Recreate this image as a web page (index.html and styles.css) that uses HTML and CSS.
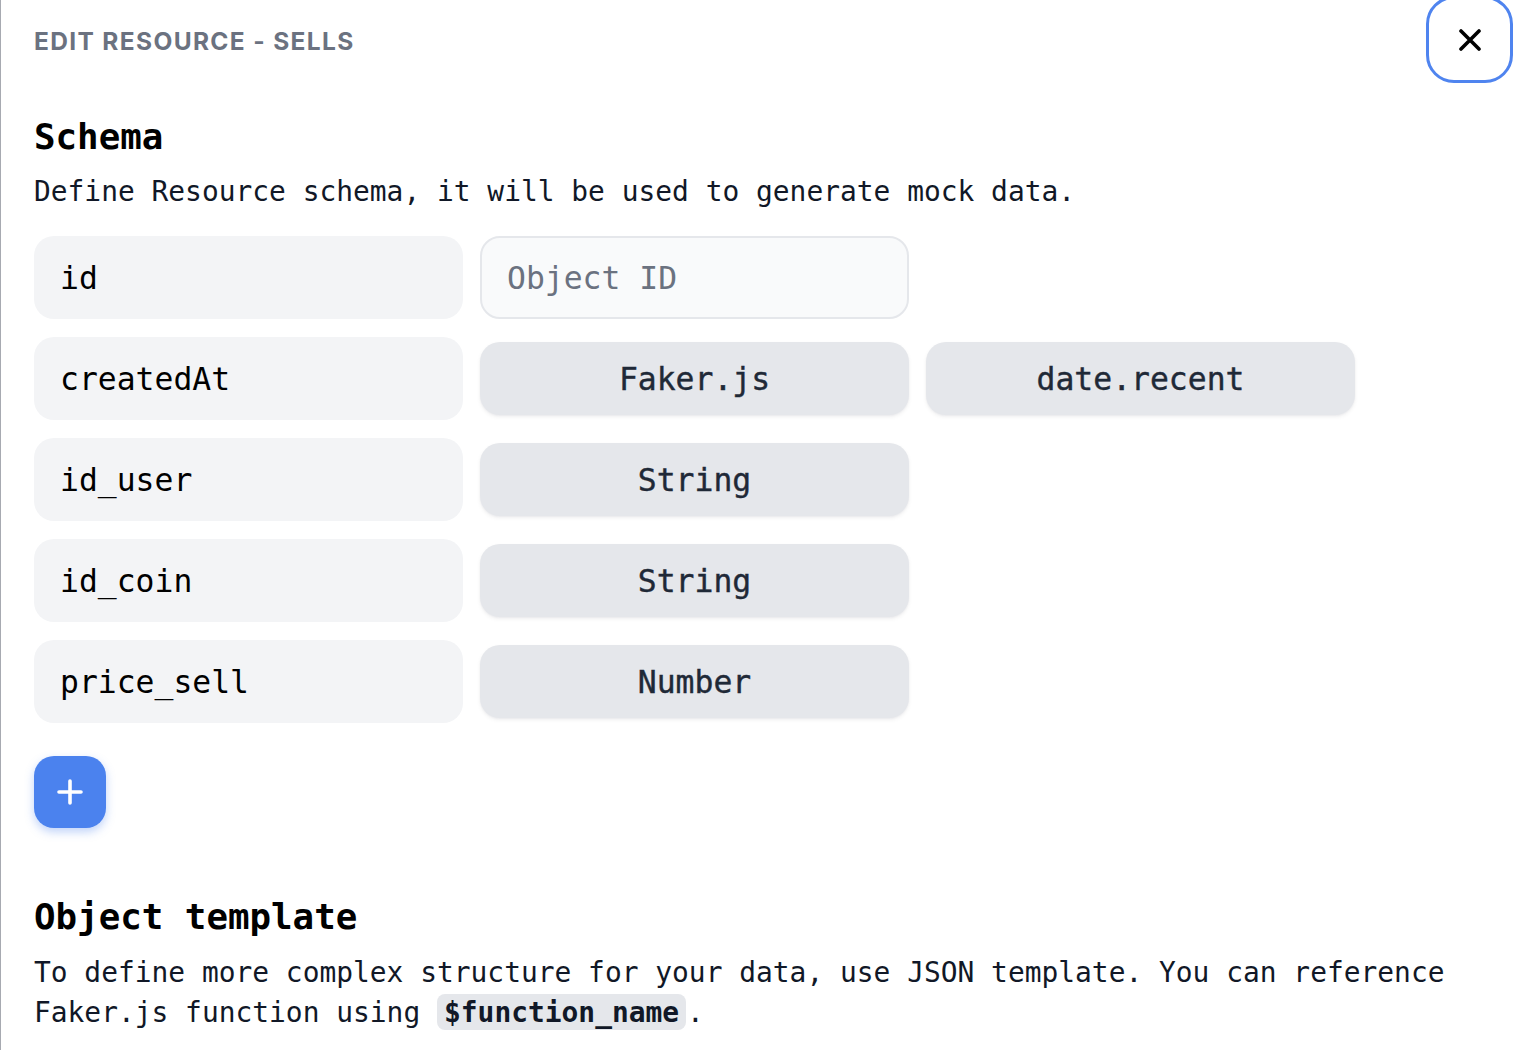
FILE: index.html
```html
<!DOCTYPE html>
<html lang="en">
<head>
<meta charset="utf-8">
<title>Edit Resource - sells</title>
<link rel="stylesheet" href="styles.css">
</head>
<body>
<div class="modal">
  <header class="modal-header">
    <h1 class="modal-title">EDIT RESOURCE - SELLS</h1>
    <button class="close-btn" aria-label="Close">
      <svg width="22" height="22" viewBox="0 0 22 22"><path d="M2 2 L20 20 M20 2 L2 20" fill="none" stroke="#000" stroke-width="3.6" stroke-linecap="round"/></svg>
    </button>
  </header>

  <section class="schema">
    <h2 class="section-title">Schema</h2>
    <p class="section-desc">Define Resource schema, it will be used to generate mock data.</p>

    <div class="fields">
      <div class="field-row">
        <div class="field-key">id</div>
        <input class="field-input" type="text" placeholder="Object ID">
      </div>
      <div class="field-row">
        <div class="field-key">createdAt</div>
        <button class="type-btn">Faker.js</button>
        <button class="type-btn">date.recent</button>
      </div>
      <div class="field-row">
        <div class="field-key">id_user</div>
        <button class="type-btn">String</button>
      </div>
      <div class="field-row">
        <div class="field-key">id_coin</div>
        <button class="type-btn">String</button>
      </div>
      <div class="field-row">
        <div class="field-key">price_sell</div>
        <button class="type-btn">Number</button>
      </div>
    </div>

    <button class="add-btn" aria-label="Add field">
      <svg width="26" height="26" viewBox="0 0 26 26"><path d="M13 2 V24 M2 13 H24" fill="none" stroke="#fff" stroke-width="3.6" stroke-linecap="round"/></svg>
    </button>
  </section>

  <section class="template">
    <h2 class="section-title">Object template</h2>
    <p class="section-desc template-desc"><span>To define more complex structure for your data, use JSON template. You can reference</span> <span>Faker.js function using</span> <code class="code-pill">$function_name</code><span>.</span></p>
  </section>
</div>
</body>
</html>
```

FILE: styles.css
```css
html, body {
  margin: 0;
  padding: 0;
  background: #ffffff;
}

body {
  font-family: "DejaVu Sans Mono", "Liberation Mono", monospace;
  color: #111827;
}

.modal {
  position: relative;
  min-height: 1050px;
  box-sizing: border-box;
  border-left: 1px solid #a7aab1;
  padding: 24px 34px 0 33px;
}

.modal-header {
  display: flex;
  align-items: center;
  height: 35px;
}

.modal-title {
  margin: 0;
  font-family: "Inter", "Liberation Sans", sans-serif;
  font-weight: 700;
  font-size: 24.5px;
  line-height: 35px;
  letter-spacing: 1.35px;
  color: #6b7280;
}

.close-btn {
  position: absolute;
  top: -4px;
  right: 5px;
  width: 87px;
  height: 87px;
  box-sizing: border-box;
  border: 3.5px solid #4f84ef;
  border-radius: 28px;
  background: #ffffff;
  display: flex;
  align-items: center;
  justify-content: center;
  padding: 0;
  cursor: pointer;
}

.close-btn svg {
  display: block;
}

.section-title {
  margin: 0;
  font-size: 35.8px;
  line-height: 49px;
  font-weight: 700;
  color: #000000;
}

.schema .section-title {
  margin-top: 53px;
}

.section-desc {
  margin: 11px 0 0;
  font-size: 27.9px;
  line-height: 40px;
  color: #111827;
}

.fields {
  margin-top: 24px;
  display: flex;
  flex-direction: column;
  gap: 18px;
}

.field-row {
  display: grid;
  grid-template-columns: 429px 429px 429px;
  column-gap: 17px;
  height: 83px;
  align-items: center;
}

.field-key {
  height: 83px;
  box-sizing: border-box;
  background: #f3f4f6;
  border-radius: 20px;
  padding: 0 26px;
  display: flex;
  align-items: center;
  font-size: 31.4px;
  color: #000000;
}

.field-input {
  height: 83px;
  box-sizing: border-box;
  margin: 0;
  background: #f9fafb;
  border: 2px solid #e5e7eb;
  border-radius: 20px;
  padding: 0 25px;
  font-family: "DejaVu Sans Mono", "Liberation Mono", monospace;
  font-size: 31.4px;
  color: #111827;
  outline: none;
}

.field-input::placeholder {
  color: #6b7280;
}

.type-btn {
  height: 73px;
  margin: 0;
  border: none;
  border-radius: 20px;
  background: #e5e7eb;
  box-shadow: 0 2px 4px rgba(17, 24, 39, 0.06), 0 1px 2px rgba(17, 24, 39, 0.04);
  font-family: "DejaVu Sans Mono", "Liberation Mono", monospace;
  font-size: 31.4px;
  color: #1f2937;
  -webkit-text-stroke: 0.4px #1f2937;
  text-align: center;
  padding: 0;
  cursor: pointer;
}

.add-btn {
  margin-top: 33px;
  width: 72px;
  height: 72px;
  border: none;
  border-radius: 20px;
  background: #4b82ee;
  box-shadow: 0 4px 10px rgba(75, 130, 238, 0.35);
  display: flex;
  align-items: center;
  justify-content: center;
  padding: 0;
  cursor: pointer;
}

.add-btn svg {
  display: block;
}

.template .section-title {
  margin-top: 64px;
}

.template-desc {
  margin-top: 12px;
}

.code-pill {
  font-family: "DejaVu Sans Mono", "Liberation Mono", monospace;
  font-size: 27.9px;
  font-weight: 700;
  color: #111827;
  background: #e5e7eb;
  border-radius: 8px;
  padding: 2px 7px 1px;
  margin-right: 1px;
}
```
